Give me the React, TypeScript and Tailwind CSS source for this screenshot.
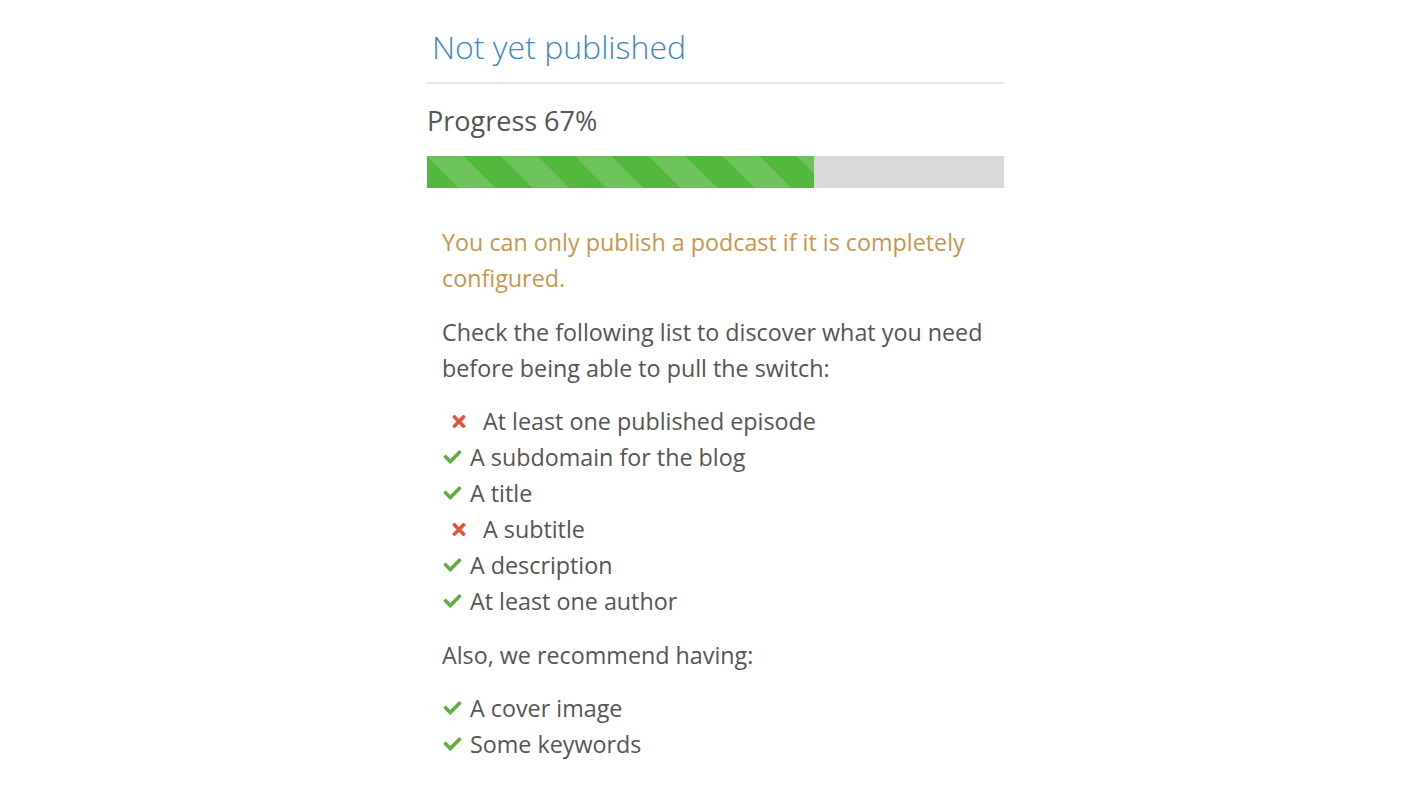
import { FaCheck, FaTimes } from "react-icons/fa";

const required = [
  { ok: false, label: "At least one published episode" },
  { ok: true, label: "A subdomain for the blog" },
  { ok: true, label: "A title" },
  { ok: false, label: "A subtitle" },
  { ok: true, label: "A description" },
  { ok: true, label: "At least one author" },
];

const recommended = [
  { ok: true, label: "A cover image" },
  { ok: true, label: "Some keywords" },
];

function CheckItem({ ok, label }: { ok: boolean; label: string }) {
  return (
    <li className="flex items-center h-[36px]">
      {ok ? (
        <FaCheck className="text-[#5fae3f] w-[21px] h-[18px] mr-[7px] shrink-0" />
      ) : (
        <FaTimes className="text-[#e0533d] w-[18px] h-[19px] ml-[8px] mr-[15px] shrink-0" />
      )}
      <span>{label}</span>
    </li>
  );
}

function App() {
  return (
    <div className="min-h-screen bg-white text-[#555] font-['Open_Sans',sans-serif]">
      <div className="ml-[427px] w-[577px] pt-[26px]">
        <h3 className="text-[32px] font-light leading-[42px] text-[#3c87c0] pl-[5px] pb-[14px] border-b-2 border-[#dfe8ef]">
          Not yet published
        </h3>
        <div className="text-[27px] leading-[36px] mt-[19px]">Progress 67%</div>
        <div className="mt-[17px] h-[32px] bg-[#d9d9d9] flex">
          <div
            className="h-full bg-[#54b73e]"
            style={{
              width: "67%",
              backgroundImage:
                "linear-gradient(45deg, rgba(255,255,255,.15) 25%, transparent 25%, transparent 50%, rgba(255,255,255,.15) 50%, rgba(255,255,255,.15) 75%, transparent 75%, transparent)",
              backgroundSize: "74px 74px",
            }}
          />
        </div>
        <div className="pl-[15px] text-[23.3px] leading-[36px]">
          <p className="mt-[36px] text-[#c8964f]">
            You can only publish a podcast if it is completely configured.
          </p>
          <p className="mt-[18px]">
            Check the following list to discover what you need before being able to pull the switch:
          </p>
          <ul className="mt-[17px]">
            {required.map((r) => (
              <CheckItem key={r.label} {...r} />
            ))}
          </ul>
          <p className="mt-[18px]">Also, we recommend having:</p>
          <ul className="mt-[17px]">
            {recommended.map((r) => (
              <CheckItem key={r.label} {...r} />
            ))}
          </ul>
        </div>
      </div>
    </div>
  );
}

export default App;
